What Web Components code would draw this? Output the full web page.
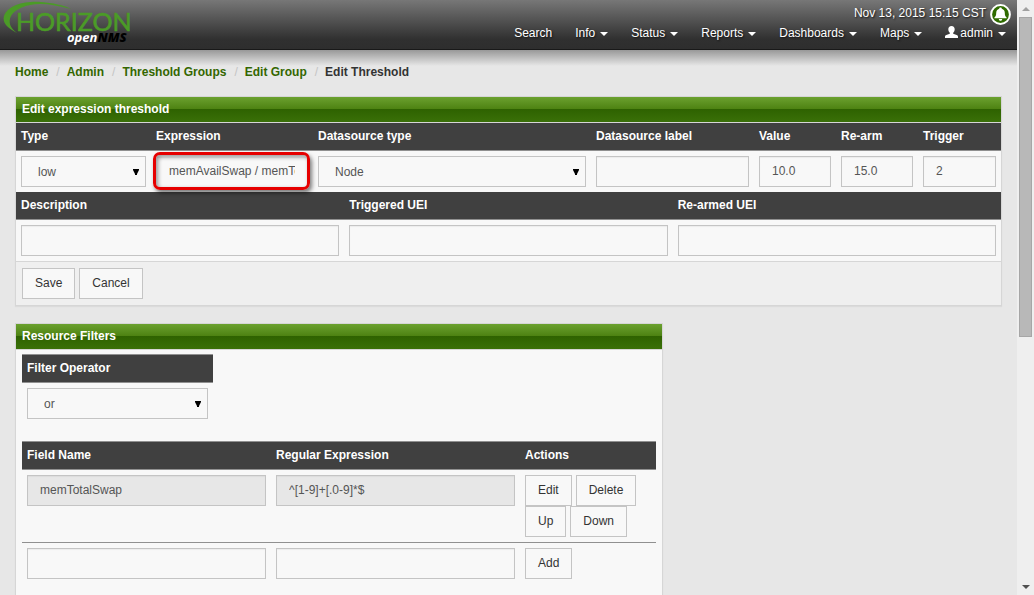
<!DOCTYPE html>
<html lang="en">
<head>
<meta charset="utf-8">
<title>Edit Threshold | Admin | OpenNMS</title>
<style>
  body {
    margin: 0;
    background: #e7e7e7;
    color: #333;
    font: 12px/16px "Liberation Sans", Arial, sans-serif;
  }
</style>
</head>
<body>
<app-frame>
  <site-header></site-header>
  <bread-crumbs></bread-crumbs>
  <ui-panel heading="Edit expression threshold">
    <threshold-form></threshold-form>
  </ui-panel>
  <ui-panel heading="Resource Filters" narrow>
    <resource-filters></resource-filters>
  </ui-panel>
</app-frame>

<script>
// Shared by every component that holds a table of form controls
const formStyles = `
  :host { display: block; }
  table {
    width: 100%;
    table-layout: fixed;
    border-collapse: separate;
    border-spacing: 0;
  }
  th {
    padding: 5px 5px 6px;
    background: #404040;
    border-bottom: 1px solid #909090;
    color: #fff;
    text-align: left;
    font-weight: bold;
  }
  td { padding: 5px; vertical-align: top; }
  input, select, button {
    box-sizing: border-box;
    height: 31px;
    margin: 0;
    border: 1px solid #c4c4c4;
    border-radius: 0;
    background: #f8f8f8;
    font: inherit;
    outline: none;
  }
  input, select { display: block; width: 100%; color: #555; }
  input { padding: 0 12px 1px; box-shadow: inset 0 1px 1px rgba(0, 0, 0, 0.05); }
  input:disabled { background: #e7e7e7; }
  select { grid-area: 1 / 1; appearance: none; padding: 1px 20px 0 16px; }
  button { padding: 0 12px 1px; color: #333; }
  .select { display: grid; align-items: center; }
  .select svg {
    grid-area: 1 / 1;
    justify-self: end;
    margin-right: 7px;
    pointer-events: none;
  }
  .buttons { display: flex; flex-wrap: wrap; column-gap: 4px; }
`;

const arrow = `<svg width="6" height="6" viewBox="0 0 6 6"><path d="M0 0h6v1L4 5v1H2V5L0 1z" fill="#000"/></svg>`;

class AppFrame extends HTMLElement {
  connectedCallback() {
    const shadow = this.attachShadow({ mode: 'open' });
    shadow.innerHTML = `
      <style>
        :host {
          display: grid;
          grid-template-columns: minmax(0, 1fr) 17px;
          height: 100vh;
        }
        main { overflow: hidden; }
      </style>
      <main><slot></slot></main>
      <scroll-track></scroll-track>
    `;
  }
}

class ScrollTrack extends HTMLElement {
  connectedCallback() {
    const shadow = this.attachShadow({ mode: 'open' });
    shadow.innerHTML = `
      <style>
        :host {
          display: flex;
          flex-direction: column;
          background: #efefef;
        }
        .end {
          flex: none;
          height: 17px;
          display: grid;
          place-items: center;
        }
        .track { flex: 1; padding: 0 2px; }
        .thumb {
          box-sizing: border-box;
          height: 57%;
          background: #b8b8b8;
          border: 1px solid #a6a6a6;
        }
      </style>
      <div class="end"><svg width="8" height="4" viewBox="0 0 8 4"><path d="M4 0l4 4H0z" fill="#a0a0a0"/></svg></div>
      <div class="track"><div class="thumb"></div></div>
      <div class="end"><svg width="8" height="4" viewBox="0 0 8 4"><path d="M0 0h8L4 4z" fill="#505050"/></svg></div>
    `;
  }
}

class SiteHeader extends HTMLElement {
  connectedCallback() {
    const shadow = this.attachShadow({ mode: 'open' });
    shadow.innerHTML = `
      <style>
        :host {
          display: flex;
          justify-content: space-between;
          box-sizing: border-box;
          height: 50px;
          background: linear-gradient(#777, #303030 80%, #2e2e2e);
          border-bottom: 1px solid #191919;
          color: #fff;
          text-shadow: 1px 1px 2px #111;
        }
        .logo { display: block; text-shadow: none; }
        .logo svg { display: block; }
        .right {
          display: flex;
          flex-direction: column;
          align-items: flex-end;
          padding-top: 4px;
        }
        .status {
          display: flex;
          gap: 4px;
          height: 21px;
          padding-right: 6px;
          line-height: 18px;
        }
        nav { display: flex; gap: 23px; padding-right: 11px; }
      </style>
      <a class="logo" href="#" aria-label="OpenNMS Horizon">
        <svg width="140" height="49" viewBox="0 0 140 49">
          <path d="M17 33C7 28 2 22 4 16C8 5 25 1 41 2C53 3 63 5 71 9C60 6 50 4 40 4C26 4 15 9 11 16C8 22 10 28 17 33z" fill="#4b9b27"/>
          <text x="16" y="31" font-family="Lato, sans-serif" font-size="25" fill="#4b9b27" stroke="#4b9b27" stroke-width="0.6">HORIZON</text>
          <text x="67" y="42" font-family="Noto Sans, sans-serif" font-size="13" font-weight="bold" font-style="italic" fill="#fff">open<tspan fill="#000" font-weight="900">NMS</tspan></text>
        </svg>
      </a>
      <div class="right">
        <div class="status">
          <span>Nov 13, 2015 15:15 CST</span>
          <svg width="21" height="21" viewBox="0 0 21 21">
            <circle cx="10.5" cy="10.5" r="9.4" fill="#2f6b00" stroke="#fff" stroke-width="2"/>
            <path d="M10.500 3.500c.8 0 1.300.5 1.300 1.200 2 .6 3 2.300 3 4.300 0 2.500.6 3.600 1.800 4.500v.8H4.400v-.8C5.600 12.600 6.200 11.500 6.200 9c0-2 1-3.700 3-4.300 0-.7.5-1.200 1.300-1.200zM8.800 15h3.400c0 1.100-.7 1.800-1.700 1.800S8.800 16.100 8.800 15z" fill="#fff"/>
          </svg>
        </div>
        <nav>
          <nav-item>Search</nav-item>
          <nav-item menu>Info</nav-item>
          <nav-item menu>Status</nav-item>
          <nav-item menu>Reports</nav-item>
          <nav-item menu>Dashboards</nav-item>
          <nav-item menu>Maps</nav-item>
          <nav-item menu>
            <svg slot="icon" width="13" height="12" viewBox="0 0 13 12"><path d="M6.500 0C8.600 0 9.700 1.300 9.700 3.200c0 1.500-.6 2.700-1.500 3.500v1l3.500 1.400c.9.400 1.300 1 1.300 1.700V12H0v-1.200c0-.7.400-1.300 1.300-1.700L4.800 7.700v-1C3.900 5.900 3.300 4.700 3.300 3.200 3.300 1.300 4.400 0 6.500 0z" fill="#fff"/></svg>admin
          </nav-item>
        </nav>
      </div>
    `;
  }
}

class NavItem extends HTMLElement {
  connectedCallback() {
    const caret = this.hasAttribute('menu')
      ? '<svg class="caret" width="8" height="4" viewBox="0 0 8 4"><path d="M0 0h8L4 4z" fill="#fff"/></svg>'
      : '';
    const shadow = this.attachShadow({ mode: 'open' });
    shadow.innerHTML = `
      <style>
        :host { display: block; }
        a {
          display: flex;
          align-items: center;
          color: #fff;
          text-decoration: none;
        }
        ::slotted(svg) { margin: 0 2px 2px 0; }
        .caret { margin: 2px 0 0 5px; }
      </style>
      <a href="#"><slot name="icon"></slot><span><slot></slot></span>${caret}</a>
    `;
  }
}

class BreadCrumbs extends HTMLElement {
  connectedCallback() {
    const shadow = this.attachShadow({ mode: 'open' });
    shadow.innerHTML = `
      <style>
        :host {
          display: block;
          padding: 12px 15px 14px;
          background: linear-gradient(#989898, #e7e7e7 16px);
          font-weight: bold;
          line-height: 20px;
        }
        ol { display: flex; margin: 0; padding: 0; list-style: none; }
        li + li::before {
          content: "/";
          padding: 0 7px 0 8px;
          color: #c4c4c4;
          font-weight: normal;
        }
        a { color: #336600; text-decoration: none; }
      </style>
      <ol>
        <li><a href="#">Home</a></li>
        <li><a href="#">Admin</a></li>
        <li><a href="#">Threshold Groups</a></li>
        <li><a href="#">Edit Group</a></li>
        <li>Edit Threshold</li>
      </ol>
    `;
  }
}

class UiPanel extends HTMLElement {
  connectedCallback() {
    const shadow = this.attachShadow({ mode: 'open' });
    shadow.innerHTML = `
      <style>
        :host {
          display: block;
          box-sizing: border-box;
          padding: 0 15px;
          margin-bottom: 17px;
        }
        :host([narrow]) { width: calc(100% * 2 / 3); }
        section {
          background: #f8f8f8;
          border: 1px solid #d6d6d6;
          box-shadow: 0 1px 1px rgba(0, 0, 0, 0.05);
        }
        h3 {
          margin: 0;
          padding: 0 6px;
          background: linear-gradient(#6ba12f, #4d8212 48%, #2e6200 48%, #3a7008);
          border-bottom: 1px solid #d6d6d6;
          color: #fff;
          font-size: 12px;
          line-height: 25px;
        }
      </style>
      <section>
        <h3>${this.getAttribute('heading')}</h3>
        <slot></slot>
      </section>
    `;
  }
}

class ThresholdForm extends HTMLElement {
  connectedCallback() {
    const shadow = this.attachShadow({ mode: 'open' });
    shadow.innerHTML = `
      <style>
        ${formStyles}
        .type { width: 135px; }
        .expression { width: 162px; }
        .label { width: 163px; }
        .number { width: 82px; }
        .trigger { width: 83px; }
        .marked { position: relative; }
        .marked::after {
          content: "";
          position: absolute;
          inset: -4px -2px -3px -3px;
          border: 3px solid #e60000;
          border-radius: 7px;
          box-shadow: 2px 3px 4px rgba(0, 0, 0, 0.5), inset 2px 2px 4px rgba(0, 0, 0, 0.4);
          pointer-events: none;
        }
        .marked input { border-color: #f8f8f8; }
        footer {
          padding: 6px;
          background: #efefef;
          border-top: 1px solid #d6d6d6;
        }
      </style>
      <table>
        <colgroup>
          <col class="type"><col class="expression"><col><col class="label">
          <col class="number"><col class="number"><col class="trigger">
        </colgroup>
        <tr>
          <th><label for="type">Type</label></th>
          <th><label for="expression">Expression</label></th>
          <th><label for="dsType">Datasource type</label></th>
          <th><label for="dsLabel">Datasource label</label></th>
          <th><label for="value">Value</label></th>
          <th><label for="rearm">Re-arm</label></th>
          <th><label for="trigger">Trigger</label></th>
        </tr>
        <tr>
          <td><div class="select"><select id="type"><option>low</option><option>high</option></select>${arrow}</div></td>
          <td><div class="marked"><input id="expression" value="memAvailSwap / memTotalSwap * 100.0"></div></td>
          <td><div class="select"><select id="dsType"><option>Node</option></select>${arrow}</div></td>
          <td><input id="dsLabel"></td>
          <td><input id="value" value="10.0"></td>
          <td><input id="rearm" value="15.0"></td>
          <td><input id="trigger" value="2"></td>
        </tr>
      </table>
      <table>
        <tr>
          <th><label for="description">Description</label></th>
          <th><label for="triggeredUEI">Triggered UEI</label></th>
          <th><label for="rearmedUEI">Re-armed UEI</label></th>
        </tr>
        <tr>
          <td><input id="description"></td>
          <td><input id="triggeredUEI"></td>
          <td><input id="rearmedUEI"></td>
        </tr>
      </table>
      <footer>
        <div class="buttons">
          <button type="button">Save</button>
          <button type="button">Cancel</button>
        </div>
      </footer>
    `;
  }
}

class ResourceFilters extends HTMLElement {
  connectedCallback() {
    const shadow = this.attachShadow({ mode: 'open' });
    shadow.innerHTML = `
      <style>
        ${formStyles}
        :host { padding: 4px 6px 40px; }
        th, .next td { border-top: 1px solid #909090; }
        .operator { width: 191px; margin-bottom: 17px; }
        .actions { width: 136px; }
      </style>
      <table class="operator">
        <tr><th><label for="operator">Filter Operator</label></th></tr>
        <tr>
          <td><div class="select"><select id="operator"><option>or</option><option>and</option></select>${arrow}</div></td>
        </tr>
      </table>
      <table>
        <colgroup><col><col><col class="actions"></colgroup>
        <tr>
          <th><label for="field">Field Name</label></th>
          <th><label for="regex">Regular Expression</label></th>
          <th>Actions</th>
        </tr>
        <tr>
          <td><input aria-label="Field Name 1" value="memTotalSwap" disabled></td>
          <td><input aria-label="Regular Expression 1" value="^[1-9]+[.0-9]*$" disabled></td>
          <td>
            <div class="buttons">
              <button type="button">Edit</button>
              <button type="button">Delete</button>
              <button type="button">Up</button>
              <button type="button">Down</button>
            </div>
          </td>
        </tr>
        <tr class="next">
          <td><input id="field"></td>
          <td><input id="regex"></td>
          <td><button type="button">Add</button></td>
        </tr>
      </table>
    `;
  }
}

customElements.define('app-frame', AppFrame);
customElements.define('scroll-track', ScrollTrack);
customElements.define('nav-item', NavItem);
customElements.define('site-header', SiteHeader);
customElements.define('bread-crumbs', BreadCrumbs);
customElements.define('ui-panel', UiPanel);
customElements.define('threshold-form', ThresholdForm);
customElements.define('resource-filters', ResourceFilters);
</script>
</body>
</html>
